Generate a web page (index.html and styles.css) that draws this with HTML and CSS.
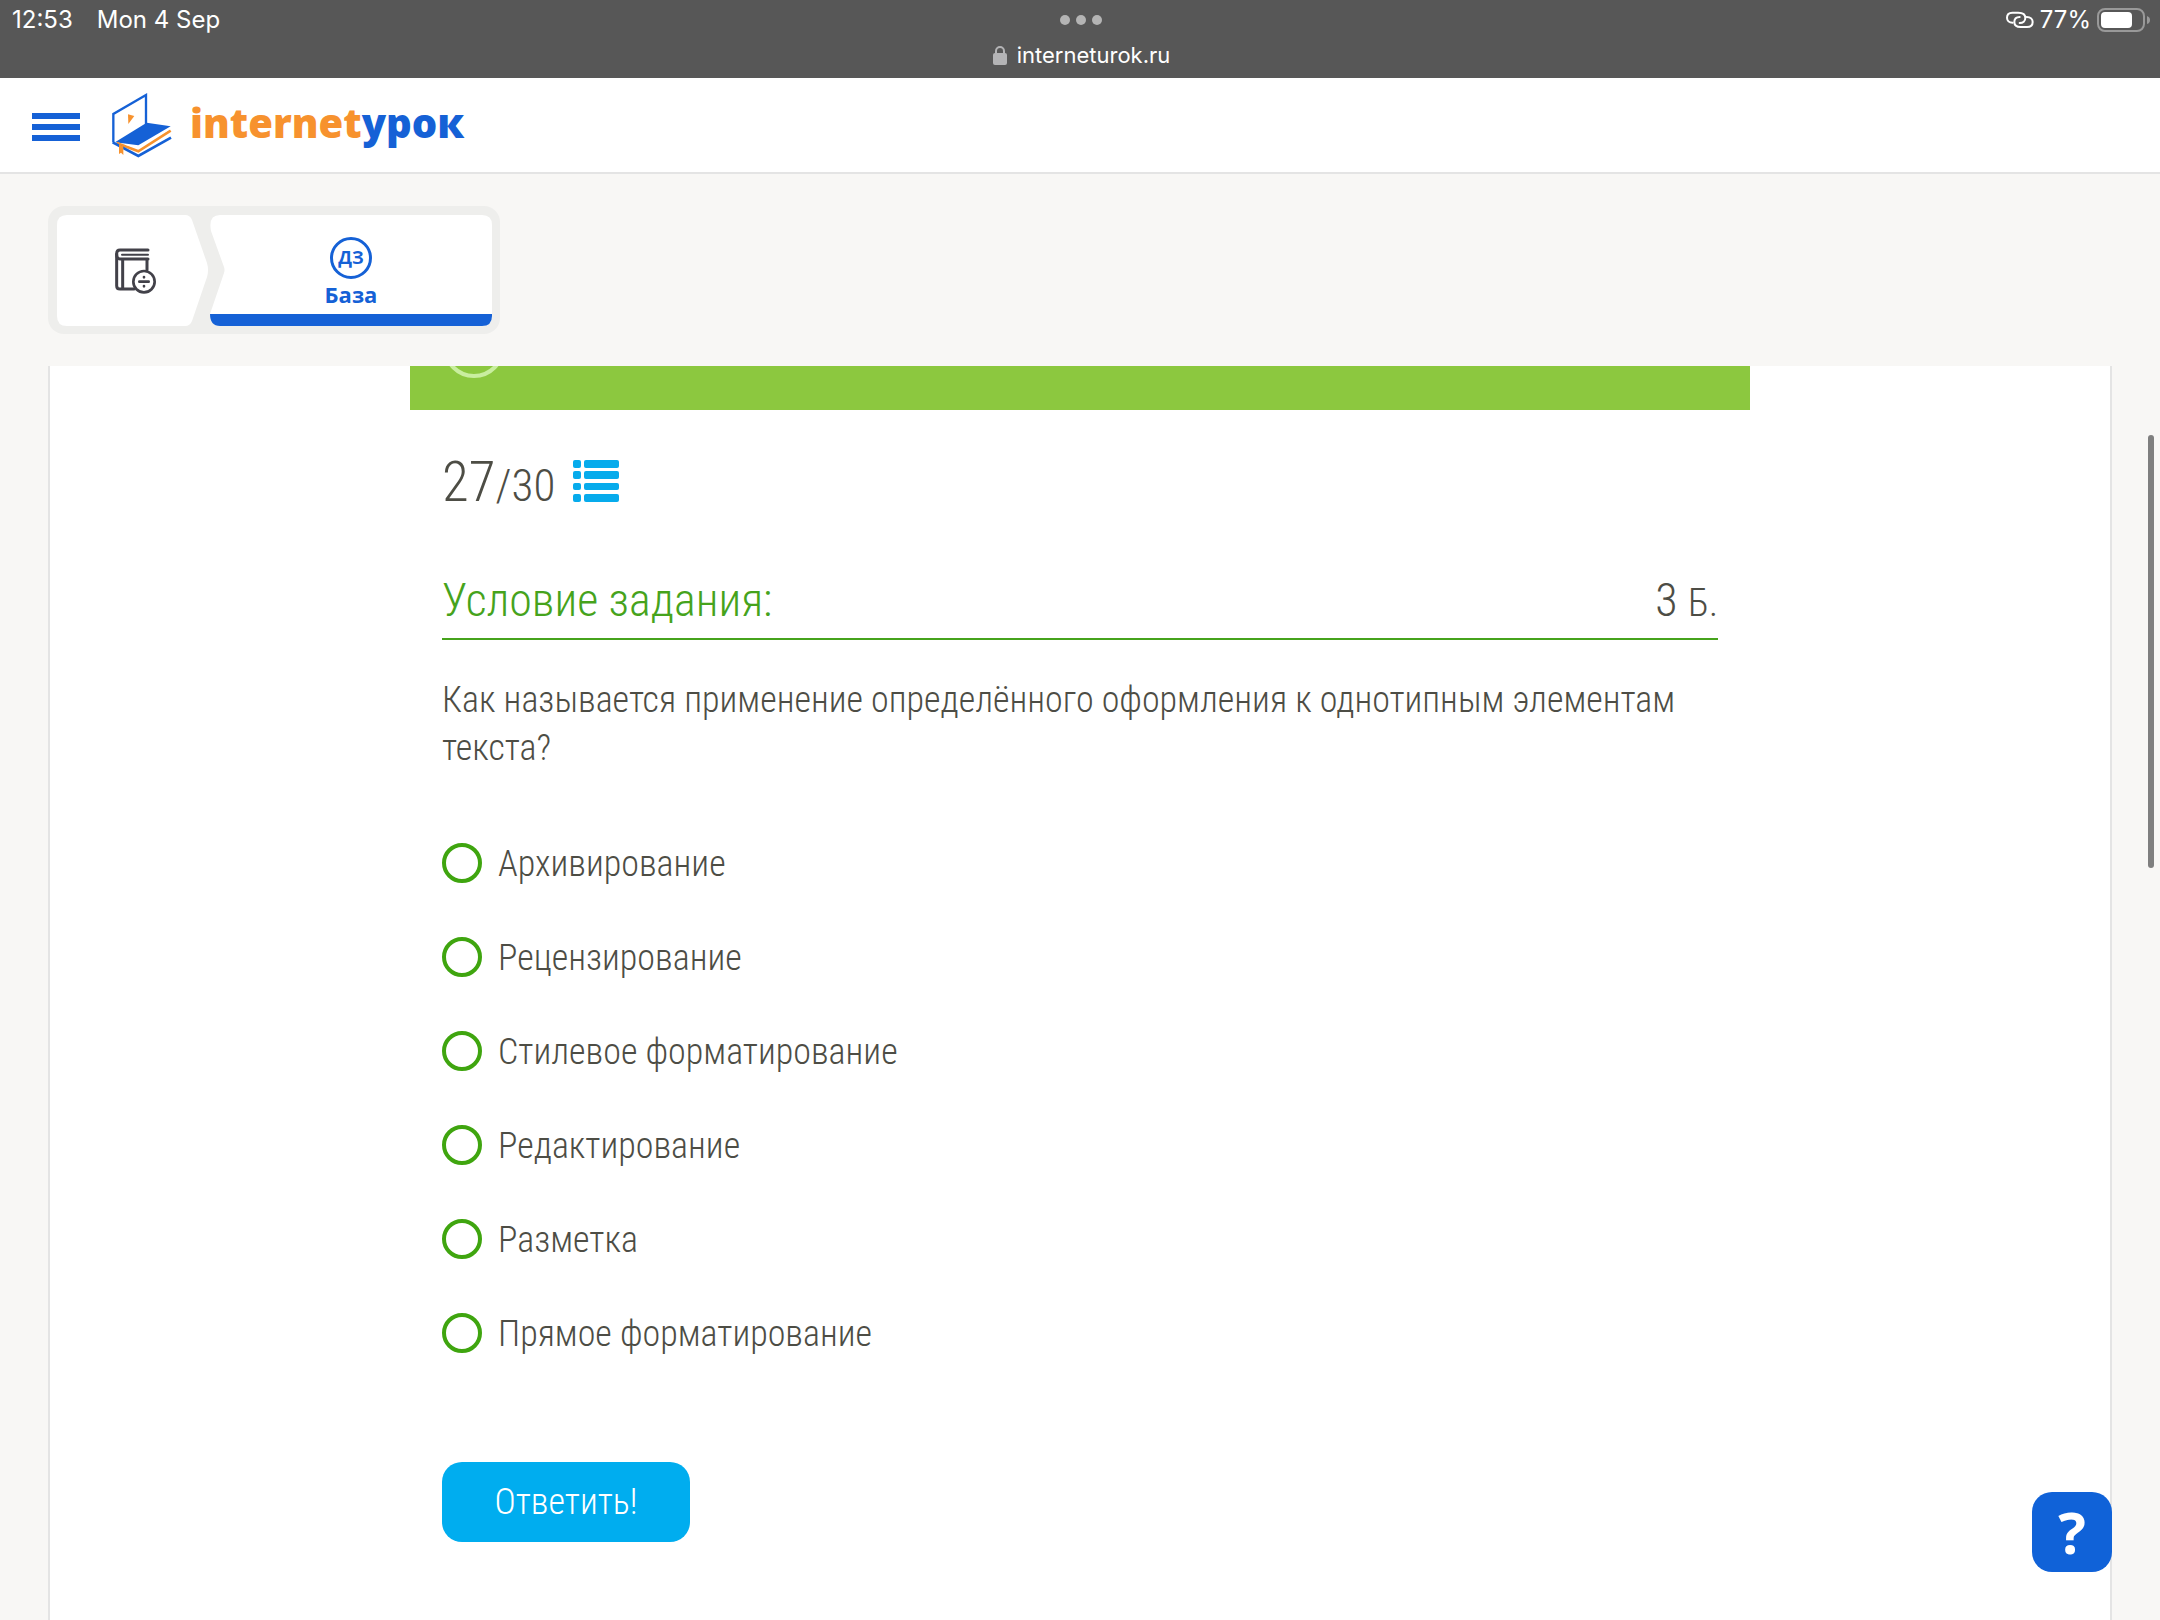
FILE: index.html
```html
<!DOCTYPE html>
<html lang="ru">
<head>
  <meta charset="UTF-8" />
  <meta name="viewport" content="width=device-width, initial-scale=1.0" />
  <title>interneturok.ru – Домашнее задание</title>
  <link rel="stylesheet" href="styles.css">
</head>
<body>
  <!-- Tablet status bar -->
  <div class="status-bar">
    <div class="status-left">
      <span>12:53</span>
      <span>Mon 4 Sep</span>
    </div>
    <div class="status-center">
      <svg class="dots" viewBox="0 0 42 10" width="42" height="10">
        <circle cx="5" cy="5" r="5" /><circle cx="21" cy="5" r="5" /><circle cx="37" cy="5" r="5" />
      </svg>
      <div class="address">
        <svg viewBox="0 0 14 20" width="14" height="20">
          <path d="M3 9V6a4 4 0 0 1 8 0v3" fill="none" stroke="#b4b4b6" stroke-width="2" />
          <rect x="0" y="8" width="14" height="12" rx="2" fill="#b4b4b6" />
        </svg>
        <span>interneturok.ru</span>
      </div>
    </div>
    <div class="status-right">
      <svg viewBox="71 31 84 54" width="28" height="18" fill="none" stroke="#fff" stroke-width="6" stroke-linecap="round">
        <path d="M91 66C80 66 74 59 74 51C74 42 80 36 90 36H108C122 36 129 43 129 52C129 61 122 67 112 67" />
        <path d="M133 49C145 49 151 56 151 64C151 73 145 79 134 79H115C102 79 96 73 96 64C96 55 102 49 112 49" />
      </svg>
      <span>77%</span>
      <svg viewBox="0 0 54 24" width="54" height="24">
        <rect x="1" y="1" width="46" height="22" rx="7" fill="none" stroke="#999" stroke-width="2" />
        <rect x="4" y="4" width="31" height="16" rx="4" fill="#fff" />
        <path d="M50 8q3 1 3 4t-3 4z" fill="#999" />
      </svg>
    </div>
  </div>

  <header class="header">
    <button class="menu-button" aria-label="Меню"><span></span><span></span><span></span></button>
    <a class="logo" href="#">
      <svg viewBox="336 280 180 195" width="60" height="65">
        <path d="M340 428V343L438 286V374" fill="none" stroke="#1561d6" stroke-width="7" />
        <path d="M345 428L440 369L512 380L415 437Z" fill="#1561d6" />
        <path d="M350 430L415 455L512 393" fill="none" stroke="#f7922e" stroke-width="8" />
        <path d="M375 434L415 444L512 386" fill="none" stroke="#fff" stroke-width="3" />
        <path d="M338 428L415 469L513 414" fill="none" stroke="#1561d6" stroke-width="8" />
        <path d="M357 433L370 440V466L363 459L357 463Z" fill="#f7922e" />
        <path d="M384 344L403 349L385 373Z" fill="#f7922e" />
      </svg>
      <span class="logo-text">internet<b>урок</b></span>
    </a>
  </header>

  <main class="page">
    <nav class="tabs">
      <button class="tab tab-lesson" aria-label="Урок">
        <svg viewBox="255 175 126 138" width="42" height="46" fill="none" stroke="#424149" stroke-width="9" stroke-linecap="round">
          <path d="M354 181H270Q260 181 260 192V288Q260 298 270 298H312" />
          <path d="M354 208H270Q260 208 260 194M278 210V296M351 210V240" />
          <path d="M276 195H354" stroke-width="6" />
          <circle cx="342" cy="276" r="32" stroke-width="8" />
          <path d="M328 276H356M342 262V263M342 289V290" stroke-width="8" />
        </svg>
      </button>
      <button class="tab tab-base">
        <span class="tab-badge">ДЗ</span>
        <span>База</span>
      </button>
    </nav>

    <section class="card">
      <form class="task">
        <div class="banner"><span class="banner-circle"></span></div>
        <div class="task-body">
          <div class="counter">
            <div class="counter-text">27<small>/30</small></div>
            <button type="button" class="list-button" aria-label="Список заданий">
              <svg viewBox="0 0 46 42" width="46" height="42" fill="#06abec">
                <rect width="8" height="8" rx="2" /><rect x="11" width="35" height="8" rx="2" />
                <rect y="11" width="8" height="8" rx="2" /><rect x="11" y="11" width="35" height="8" rx="2" />
                <rect y="23" width="8" height="7" rx="2" /><rect x="11" y="23" width="35" height="7" rx="2" />
                <rect y="34" width="8" height="8" rx="2" /><rect x="11" y="34" width="35" height="8" rx="2" />
              </svg>
            </button>
          </div>
          <div class="task-head">
            <h1>Условие задания:</h1>
            <div class="points">3 <small>Б.</small></div>
          </div>
          <p class="question">Как называется применение определённого оформления к однотипным элементам текста?</p>
          <div class="answers">
            <label><input type="radio" name="answer"><span>Архивирование</span></label>
            <label><input type="radio" name="answer"><span>Рецензирование</span></label>
            <label><input type="radio" name="answer"><span>Стилевое форматирование</span></label>
            <label><input type="radio" name="answer"><span>Редактирование</span></label>
            <label><input type="radio" name="answer"><span>Разметка</span></label>
            <label><input type="radio" name="answer"><span>Прямое форматирование</span></label>
          </div>
          <button type="button" class="submit">Ответить!</button>
        </div>
      </form>
    </section>
  </main>

  <!-- Floating elements -->
  <button class="help-button" aria-label="Помощь">?</button>
  <div class="scroll-thumb"></div>
</body>
</html>
```

FILE: styles.css
```css
/* Global styles */
* {
  box-sizing: border-box;
}
body {
  margin: 0;
  min-height: 100vh;
  display: flex;
  flex-direction: column;
  background: #f8f7f5;
  color: #4d4d45;
  font-family: "Roboto Condensed", Roboto, sans-serif;
  font-weight: 300;
}
button {
  border: none;
  padding: 0;
  font: inherit;
  cursor: pointer;
}
svg {
  display: block;
}

/* Status bar */
.status-bar {
  display: grid;
  grid-template-columns: 1fr auto 1fr;
  height: 78px;
  padding: 0 9px 0 12px;
  background: #575757;
  color: #fff;
  font: 400 24px/40px Inter, sans-serif;
}
.status-left,
.status-right {
  display: flex;
  align-items: center;
  height: 40px;
}
.status-left {
  gap: 24px;
}
.status-right {
  justify-content: flex-end;
  gap: 6px;
}
.status-center {
  display: flex;
  flex-direction: column;
  align-items: center;
  padding-top: 15px;
  gap: 15px;
}
.dots {
  fill: #b4b4b4;
}
.address {
  display: flex;
  align-items: center;
  gap: 10px;
  font-size: 22px;
  line-height: 30px;
}

/* Header */
.header {
  display: flex;
  align-items: center;
  gap: 32px;
  height: 96px;
  padding: 0 32px;
  background: #fff;
  border-bottom: 2px solid #e4e4e4;
}
.menu-button {
  display: flex;
  flex-direction: column;
  gap: 5px;
  width: 48px;
  padding-top: 4px;
  background: none;
}
.menu-button span {
  height: 6px;
  background: #1561d6;
}
.logo {
  display: flex;
  align-items: center;
  gap: 18px;
  text-decoration: none;
}
.logo-text {
  padding-bottom: 4px;
  color: #f7922e;
  font: 800 40px/48px "Open Sans", sans-serif;
}
.logo-text b {
  color: #1561d6;
  font-weight: 800;
}

/* Page */
.page {
  flex: 1;
  display: flex;
  flex-direction: column;
  align-items: flex-start;
  gap: 32px;
  padding: 32px 48px 0;
}
.tabs {
  display: flex;
  gap: 2px;
  padding: 9px 8px 8px 9px;
  background: #eeeeec;
  border-radius: 16px;
}
.tab {
  display: flex;
  flex-direction: column;
  align-items: center;
  height: 111px;
  background: #fff;
  color: #1561d6;
  font: 700 22px/30px "Open Sans", sans-serif;
}
/* Tabs meet in an arrow shape */
.tab-lesson {
  width: 151px;
  padding-left: 6px;
  justify-content: center;
  clip-path: path("M10 0H128Q133 0 135 5L150 48Q152 55 150 62L135 106Q133 111 128 111H10Q0 111 0 101V10Q0 0 10 0Z");
}
.tab-base {
  width: 282px;
  padding-top: 22px;
  border-bottom: 12px solid #1561d6;
  clip-path: path("M10 0H272Q282 0 282 10V101Q282 111 272 111H10Q0 111 0 99L14 58Q15 55 14 52L1 16Q-2 0 10 0Z");
}
.tab-badge {
  width: 42px;
  height: 42px;
  border: 3px solid #1561d6;
  border-radius: 50%;
  font-size: 18px;
  line-height: 34px;
}
.card {
  flex: 1;
  align-self: stretch;
  background: #fff;
  border: 2px solid #e4e4e4;
  border-width: 0 2px;
}

/* Task */
.task {
  max-width: 1340px;
  margin: 0 auto;
}
.banner {
  position: relative;
  height: 44px;
  background: #8cc83f;
  overflow: hidden;
}
.banner-circle {
  position: absolute;
  left: 33px;
  bottom: 32px;
  width: 62px;
  height: 62px;
  border: 4px solid #c9ee9f;
  border-radius: 50%;
}
.task-body {
  padding: 40px 32px;
}
.counter {
  display: flex;
  align-items: flex-start;
  gap: 18px;
  margin-bottom: 52px;
}
.counter-text {
  font-size: 55px;
  line-height: 64px;
}
.counter-text small {
  font-size: 45px;
}
.list-button {
  padding-top: 10px;
  background: none;
}
.task-head {
  display: flex;
  justify-content: space-between;
  align-items: baseline;
  padding-bottom: 5px;
  margin-bottom: 36px;
  border-bottom: 2px solid #46a31c;
  font-size: 46px;
  line-height: 60px;
}
.task-head h1 {
  margin: 0;
  color: #46a31c;
  font-size: inherit;
  font-weight: 300;
}
.points small {
  font-size: 38px;
}
.question {
  margin: 0 0 68px;
  font-size: 36px;
  line-height: 48px;
}
.answers {
  display: flex;
  flex-direction: column;
  gap: 46px;
  margin-bottom: 104px;
}
.answers label {
  display: flex;
  align-items: center;
  gap: 16px;
  font-size: 36px;
  line-height: 48px;
}
.answers input {
  appearance: none;
  width: 40px;
  height: 40px;
  margin: 0 0 2px;
  border: 4px solid #3fa50f;
  border-radius: 50%;
}
.answers input:checked {
  background: #3fa50f;
  box-shadow: inset 0 0 0 6px #fff;
}
.submit {
  width: 248px;
  height: 80px;
  background: #00adef;
  border-radius: 20px;
  color: #fff;
  font-size: 36px;
}

/* Floating help button and scroll thumb */
.help-button {
  position: fixed;
  right: 48px;
  bottom: 48px;
  width: 80px;
  height: 80px;
  background: #1062d8;
  border-radius: 20px;
  color: #fff;
  font: 700 58px/80px "Open Sans", sans-serif;
}
.scroll-thumb {
  position: fixed;
  top: 435px;
  right: 6px;
  width: 6px;
  height: 433px;
  border-radius: 3px;
  background: #7f7f7f;
}
```
